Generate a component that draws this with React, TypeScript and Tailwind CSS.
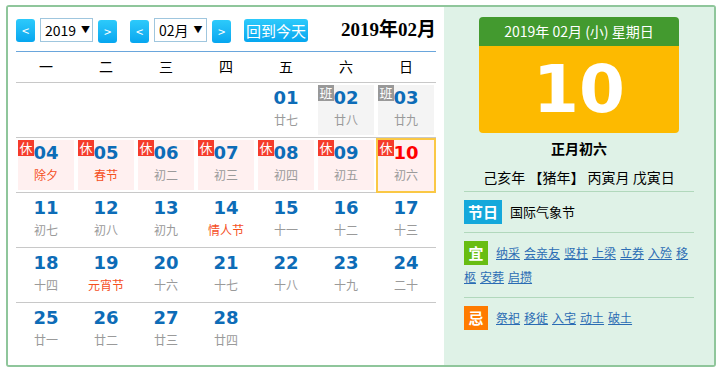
import React from 'react'

const CJK = '"Noto Sans CJK SC", "Noto Sans", sans-serif'

type Day = {
  d: string
  l: string
  tag?: 'xiu' | 'ban'
  fest?: boolean
  today?: boolean
} | null

const rows: Day[][] = [
  [null, null, null, null,
    { d: '01', l: '廿七' },
    { d: '02', l: '廿八', tag: 'ban' },
    { d: '03', l: '廿九', tag: 'ban' }],
  [
    { d: '04', l: '除夕', tag: 'xiu', fest: true },
    { d: '05', l: '春节', tag: 'xiu', fest: true },
    { d: '06', l: '初二', tag: 'xiu' },
    { d: '07', l: '初三', tag: 'xiu' },
    { d: '08', l: '初四', tag: 'xiu' },
    { d: '09', l: '初五', tag: 'xiu' },
    { d: '10', l: '初六', tag: 'xiu', today: true },
  ],
  [
    { d: '11', l: '初七' }, { d: '12', l: '初八' }, { d: '13', l: '初九' },
    { d: '14', l: '情人节', fest: true },
    { d: '15', l: '十一' }, { d: '16', l: '十二' }, { d: '17', l: '十三' },
  ],
  [
    { d: '18', l: '十四' },
    { d: '19', l: '元宵节', fest: true },
    { d: '20', l: '十六' }, { d: '21', l: '十七' }, { d: '22', l: '十八' },
    { d: '23', l: '十九' }, { d: '24', l: '二十' },
  ],
  [
    { d: '25', l: '廿一' }, { d: '26', l: '廿二' }, { d: '27', l: '廿三' }, { d: '28', l: '廿四' },
    null, null, null,
  ],
]

const weekdays = ['一', '二', '三', '四', '五', '六', '日']
const yi = ['纳采', '会亲友', '竖柱', '上梁', '立券', '入殓', '移柩', '安葬', '启攒']
const ji = ['祭祀', '移徙', '入宅', '动土', '破土']

function NavBtn({ children }: { children: React.ReactNode }) {
  return (
    <button className="w-[19px] h-[23px] rounded-[3px] bg-linear-to-b from-[#2ccafb] to-[#05a6ef] text-white text-[13px] leading-[23px] text-center">
      {children}
    </button>
  )
}

function FakeSelect({ value }: { value: string }) {
  return (
    <div className="w-[53px] h-[24px] border border-[#9fc6de] bg-white flex items-center gap-[5px] pl-[4px] text-[14px] text-black">
      <span>{value}</span>
      <span className="text-[9px]">▼</span>
    </div>
  )
}

function Cell({ day }: { day: Day }) {
  if (!day) return <div className="h-[54px]" />

  const numColor = day.today ? 'text-[#ff0000]' : 'text-[#0d6cb7]'
  const lunarColor = day.fest ? 'text-[#f5501f]' : 'text-[#9a9a9a]'
  const badge = day.tag && (
    <span
      className={`absolute top-0 left-0 w-[16px] h-[16px] text-[13px] leading-[16px] text-center text-white ${
        day.tag === 'xiu' ? 'bg-[#f53b2b]' : 'bg-[#999999]'
      }`}
    >
      {day.tag === 'xiu' ? '休' : '班'}
    </span>
  )
  const content = (
    <>
      <span
        className={`pt-[2px] text-[18px] leading-[22px] font-bold ${numColor}`}
        style={{ fontFamily: '"DejaVu Sans", sans-serif' }}
      >
        {day.d}
      </span>
      <span className={`mt-[3px] text-[12px] leading-[16px] ${lunarColor}`}>{day.l}</span>
    </>
  )

  if (day.today) {
    return (
      <div className="relative z-10 h-[55px] -mb-[1px] border-2 border-[#fac845] bg-[#fff0f0] flex flex-col items-center">
        <span className="absolute top-0 left-0 w-[16px] h-[16px] text-[13px] leading-[16px] text-center text-white bg-[#f53b2b]">休</span>
        {content}
      </div>
    )
  }

  const bg = day.tag === 'xiu' ? 'bg-[#fff0f0]' : day.tag === 'ban' ? 'bg-[#f4f4f4]' : ''
  return (
    <div className="h-[54px] p-[2px]">
      <div className={`relative h-full flex flex-col items-center ${bg}`}>
        {badge}
        {content}
      </div>
    </div>
  )
}

function Tag({ label, color }: { label: string; color: string }) {
  return (
    <span className={`float-left w-[24px] h-[24px] mr-[8px] ${color} text-white text-[15px] font-bold leading-[24px] text-center`}>
      {label}
    </span>
  )
}

export default function App() {
  return (
    <div className="w-[722px] h-[368px] bg-white pt-[5px] pl-[6px]" style={{ fontFamily: CJK }}>
      <div className="w-[710px] h-[362px] border-2 border-[#8fc69b] rounded-[3px] flex overflow-hidden">
        {/* calendar */}
        <div className="w-[436px] px-[8px] pt-[11px] bg-white">
          <div className="h-[24px] flex items-center">
            <NavBtn>&lt;</NavBtn>
            <div className="ml-[5px]"><FakeSelect value="2019" /></div>
            <div className="ml-[5px]"><NavBtn>&gt;</NavBtn></div>
            <div className="ml-[13px]"><NavBtn>&lt;</NavBtn></div>
            <div className="ml-[5px]"><FakeSelect value="02月" /></div>
            <div className="ml-[5px]"><NavBtn>&gt;</NavBtn></div>
            <button className="ml-[13px] h-[23px] px-[2px] rounded-[3px] bg-linear-to-b from-[#2ccafb] to-[#05a6ef] text-white text-[15px] leading-[23px]">
              回到今天
            </button>
            <span
              className="ml-auto text-[19px] font-bold text-black"
              style={{ fontFamily: '"Liberation Serif", "Noto Sans CJK SC", serif' }}
            >
              2019年02月
            </span>
          </div>

          <div className="mt-[9px] border-t border-[#6aa6dc]">
            <div className="grid grid-cols-7 h-[31px] border-b border-[#c8c8c8]">
              {weekdays.map(w => (
                <div key={w} className="flex items-center justify-center text-[14px] text-black pb-[1px]">{w}</div>
              ))}
            </div>
            {rows.map((row, i) => (
              <div key={i} className={`grid grid-cols-7 ${i < rows.length - 1 ? 'border-b border-[#c8c8c8]' : ''}`}>
                {row.map((day, j) => <Cell key={j} day={day} />)}
              </div>
            ))}
          </div>
        </div>

        {/* detail */}
        <div className="flex-1 bg-[#dff2e7] flex flex-col items-center">
          <div className="mt-[10px] w-[200px] rounded-[4px] overflow-hidden">
            <div className="h-[29px] bg-[#439a2f] text-white text-[14px] leading-[29px] text-center">
              2019年 02月 (小) 星期日
            </div>
            <div
              className="h-[87px] bg-[#fdba00] text-white text-[66px] font-bold leading-[87px] text-center"
              style={{ fontFamily: '"DejaVu Sans", sans-serif' }}
            >
              10
            </div>
          </div>
          <div className="mt-[5px] text-[14px] leading-[20px] font-bold text-black">正月初六</div>
          <div className="mt-[9px] text-[14px] leading-[20px] text-black">己亥年 【猪年】 丙寅月 戊寅日</div>

          <div className="mt-[4px] w-[230px]">
            <div className="border-t border-[#b1d8bc] py-[8px] flex items-center">
              <span className="w-[38px] h-[24px] mr-[8px] bg-[#14a8db] text-white text-[15px] font-bold leading-[24px] text-center">节日</span>
              <span className="text-[13px] text-black">国际气象节</span>
            </div>
            <div className="border-t border-[#b1d8bc] py-[8px] text-[12px] leading-[24px] after:content-[''] after:block after:clear-both">
              <Tag label="宜" color="bg-[#68bd12]" />
              {yi.map(t => (
                <a key={t} className="mr-[4px] text-[#2b6cb4] underline">{t}</a>
              ))}
            </div>
            <div className="border-t border-[#b1d8bc] py-[8px] text-[12px] leading-[24px] after:content-[''] after:block after:clear-both">
              <Tag label="忌" color="bg-[#ff7b00]" />
              {ji.map(t => (
                <a key={t} className="mr-[4px] text-[#2b6cb4] underline">{t}</a>
              ))}
            </div>
          </div>
        </div>
      </div>
    </div>
  )
}
